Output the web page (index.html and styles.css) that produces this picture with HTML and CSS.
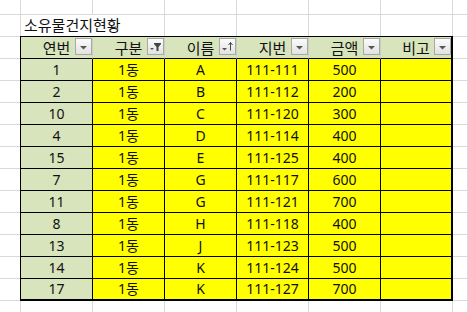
FILE: index.html
```html
<!DOCTYPE html>
<html lang="ko">
<head>
<meta charset="utf-8">
<link rel="stylesheet" href="styles.css">
</head>
<body>
<div class="sheet">
  <!-- row 1 -->
  <div class="c"></div><div class="c"></div><div class="c"></div><div class="c"></div><div class="c"></div><div class="c"></div><div class="c"></div><div class="c"></div>
  <!-- row 2 -->
  <div class="c"></div><div class="c title">소유물건지현황</div><div class="c"></div><div class="c"></div><div class="c"></div><div class="c"></div><div class="c"></div>
  <!-- left & right margins for table rows -->
  <div class="c side-l r3"></div><div class="c side-r r3"></div>
  <div class="c side-l r4"></div><div class="c side-r r4"></div>
  <div class="c side-l r5"></div><div class="c side-r r5"></div>
  <div class="c side-l r6"></div><div class="c side-r r6"></div>
  <div class="c side-l r7"></div><div class="c side-r r7"></div>
  <div class="c side-l r8"></div><div class="c side-r r8"></div>
  <div class="c side-l r9"></div><div class="c side-r r9"></div>
  <div class="c side-l r10"></div><div class="c side-r r10"></div>
  <div class="c side-l r11"></div><div class="c side-r r11"></div>
  <div class="c side-l r12"></div><div class="c side-r r12"></div>
  <div class="c side-l r13"></div><div class="c side-r r13"></div>
  <div class="c side-l r14"></div><div class="c side-r r14"></div>

  <div class="table">
    <div class="h">연번<span class="dd"><svg viewBox="0 0 15 15" width="15" height="15"><path d="M4 7h7l-3.5 3.5z" fill="#555"/></svg></span></div>
    <div class="h">구분<span class="dd"><svg viewBox="0 0 15 15" width="15" height="15"><path d="M2 9h4l-2 2z" fill="#555"/><path d="M6 4h7v1l-2.5 3v4h-2v-4L6 5z" fill="#444"/></svg></span></div>
    <div class="h">이름<span class="dd"><svg viewBox="0 0 15 15" width="15" height="15"><path d="M2 9h5l-2.5 2.5z" fill="#555"/><path d="M10.5 3.5v8" stroke="#444" stroke-width="1"/><path d="M8.5 6l2-2.5 2 2.5" fill="none" stroke="#444" stroke-width="1"/></svg></span></div>
    <div class="h">지번<span class="dd"><svg viewBox="0 0 15 15" width="15" height="15"><path d="M4 7h7l-3.5 3.5z" fill="#555"/></svg></span></div>
    <div class="h">금액<span class="dd"><svg viewBox="0 0 15 15" width="15" height="15"><path d="M4 7h7l-3.5 3.5z" fill="#555"/></svg></span></div>
    <div class="h last">비고<span class="dd"><svg viewBox="0 0 15 15" width="15" height="15"><path d="M4 7h7l-3.5 3.5z" fill="#555"/></svg></span></div>

    <div class="d g">1</div><div class="d">1동</div><div class="d">A</div><div class="d">111-111</div><div class="d">500</div><div class="d last"></div>
    <div class="d g">2</div><div class="d">1동</div><div class="d">B</div><div class="d">111-112</div><div class="d">200</div><div class="d last"></div>
    <div class="d g">10</div><div class="d">1동</div><div class="d">C</div><div class="d">111-120</div><div class="d">300</div><div class="d last"></div>
    <div class="d g">4</div><div class="d">1동</div><div class="d">D</div><div class="d">111-114</div><div class="d">400</div><div class="d last"></div>
    <div class="d g">15</div><div class="d">1동</div><div class="d">E</div><div class="d">111-125</div><div class="d">400</div><div class="d last"></div>
    <div class="d g">7</div><div class="d">1동</div><div class="d">G</div><div class="d">111-117</div><div class="d">600</div><div class="d last"></div>
    <div class="d g">11</div><div class="d">1동</div><div class="d">G</div><div class="d">111-121</div><div class="d">700</div><div class="d last"></div>
    <div class="d g">8</div><div class="d">1동</div><div class="d">H</div><div class="d">111-118</div><div class="d">400</div><div class="d last"></div>
    <div class="d g">13</div><div class="d">1동</div><div class="d">J</div><div class="d">111-123</div><div class="d">500</div><div class="d last"></div>
    <div class="d g">14</div><div class="d">1동</div><div class="d">K</div><div class="d">111-124</div><div class="d">500</div><div class="d last"></div>
    <div class="d g b">17</div><div class="d b">1동</div><div class="d b">K</div><div class="d b">111-127</div><div class="d b">700</div><div class="d b last"></div>
  </div>

  <!-- bottom row -->
  <div class="c bot"></div><div class="c bot"></div><div class="c bot"></div><div class="c bot"></div><div class="c bot"></div><div class="c bot"></div><div class="c bot"></div><div class="c bot"></div>
</div>
</body>
</html>
```

FILE: styles.css
```css
* { box-sizing: border-box; }
html, body { margin: 0; padding: 0; background: #fff; }
body {
  font-family: "Noto Sans", "Noto Sans CJK KR", sans-serif;
  font-size: 14px;
  color: #111;
  width: 468px;
  height: 312px;
  overflow: hidden;
}
.sheet {
  display: grid;
  grid-template-columns: 21px repeat(6, 72px) 1fr;
  grid-template-rows: 15px 22px repeat(12, 22px) 1fr;
  width: 468px;
  height: 312px;
}
.c {
  border-right: 1px solid #d9d9d9;
  border-bottom: 1px solid #d9d9d9;
}
.title {
  grid-column: 2 / 4;
  display: flex;
  align-items: flex-end;
  padding: 0 0 1px 3px;
  font-family: "Noto Sans CJK KR", sans-serif;
  font-size: 15px;
  line-height: 20px;
  white-space: nowrap;
}
.side-l { grid-column: 1; }
.side-r { grid-column: 8; }
.r3 { grid-row: 3; } .r4 { grid-row: 4; } .r5 { grid-row: 5; } .r6 { grid-row: 6; }
.r7 { grid-row: 7; } .r8 { grid-row: 8; } .r9 { grid-row: 9; } .r10 { grid-row: 10; }
.r11 { grid-row: 11; } .r12 { grid-row: 12; } .r13 { grid-row: 13; } .r14 { grid-row: 14; }
.bot { grid-row: 15; border-bottom: none; }

.table {
  grid-column: 2 / 8;
  grid-row: 3 / 15;
  margin: -1px 0 0 -1px;
  border: 1px solid #000;
  border-right-width: 2px;
  border-bottom-width: 2px;
  display: grid;
  grid-template-columns: repeat(5, 72px) 1fr;
  grid-template-rows: repeat(11, 22px) 1fr;
}
.h, .d {
  display: flex;
  align-items: center;
  justify-content: center;
  border-right: 1px solid #000;
  border-bottom: 1px solid #000;
  line-height: 18px;
  white-space: nowrap;
}
.h {
  position: relative;
  background: #d8e4bc;
  border-right-color: #c8cfc0;
  font-family: "Noto Sans CJK KR", sans-serif;
  font-size: 15px;
}
.d { background: #ffff00; }
.d.g { background: #d8e4bc; }
.last { border-right: none; }
.b { border-bottom: none; }
.dd {
  position: absolute;
  right: 0;
  top: 1px;
  width: 17px;
  height: 17px;
  border: 1px solid #a8a8a8;
  background: linear-gradient(#fbfbfb, #e2e2e2);
  display: flex;
}
.dd svg { display: block; }
```
